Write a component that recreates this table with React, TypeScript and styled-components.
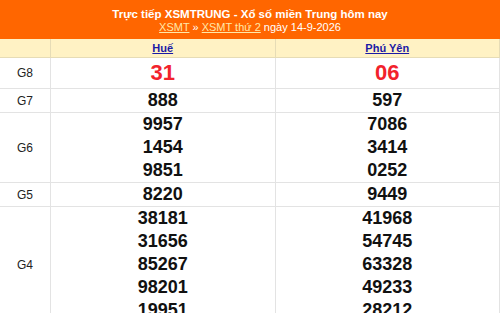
import React from 'react';
import styled, { createGlobalStyle } from 'styled-components';

type Prize = { label: string; values: string[][]; big?: boolean };

const provinces = ['Huế', 'Phú Yên'];

const prizes: Prize[] = [
  { label: 'G8', values: [['31'], ['06']], big: true },
  { label: 'G7', values: [['888'], ['597']] },
  { label: 'G6', values: [['9957', '1454', '9851'], ['7086', '3414', '0252']] },
  { label: 'G5', values: [['8220'], ['9449']] },
  {
    label: 'G4',
    values: [
      ['38181', '31656', '85267', '98201', '19951'],
      ['41968', '54745', '63328', '49233', '28212'],
    ],
  },
];

const GlobalStyle = createGlobalStyle`
  body {
    margin: 0;
    background: #ffffff;
    font-family: "Liberation Sans", Arial, sans-serif;
  }
`;

const Box = styled.div`
  width: 500px;
  overflow: hidden;
`;

const Title = styled.div`
  background-color: #ff6600;
  color: #ffffff;
  text-align: center;
  padding: 7px 0 4px;
  height: 28px;
`;

const TitleMain = styled.h2`
  margin: 0;
  font-size: 11.5px;
  font-weight: bold;
  line-height: 14px;
`;

const SubLine = styled.div`
  font-size: 11px;
  line-height: 13px;
`;

const CrumbLink = styled.a`
  color: #ffe8a8;
  text-decoration: underline;
`;

const Table = styled.table`
  width: 100%;
  border-collapse: collapse;
  table-layout: fixed;
`;

const HeadCell = styled.th`
  background-color: #fff2c4;
  border: 1px solid #e6dcb6;
  border-top: none;
  height: 18px;
  padding: 0;
  font-size: 11px;
  &:first-child {
    width: 50px;
    border-left: none;
  }
`;

const ProvinceLink = styled.a`
  color: #1a1aa6;
  font-weight: bold;
  text-decoration: underline;
`;

const LabelCell = styled.td`
  width: 50px;
  border: 1px solid #e3e3e3;
  border-left: none;
  text-align: center;
  font-size: 12px;
  color: #222222;
  padding: 0;
`;

const NumCell = styled.td`
  border: 1px solid #e3e3e3;
  text-align: center;
  padding: 0;
  vertical-align: middle;
`;

const Num = styled.div<{ $big?: boolean }>`
  font-weight: bold;
  font-size: ${(p) => (p.$big ? '22px' : '18px')};
  line-height: ${(p) => (p.$big ? '30px' : '23px')};
  color: ${(p) => (p.$big ? '#f2222c' : '#111111')};
`;

const App: React.FC = () => {
  return (
    <>
      <GlobalStyle />
      <Box>
        <Title>
          <TitleMain>Trực tiếp XSMTRUNG - Xổ số miền Trung hôm nay</TitleMain>
          <SubLine>
            <CrumbLink href="#">XSMT</CrumbLink> » <CrumbLink href="#">XSMT thứ 2</CrumbLink> ngày 14-9-2026
          </SubLine>
        </Title>
        <Table>
          <thead>
            <tr>
              <HeadCell />
              {provinces.map((p) => (
                <HeadCell key={p}>
                  <ProvinceLink href="#">{p}</ProvinceLink>
                </HeadCell>
              ))}
            </tr>
          </thead>
          <tbody>
            {prizes.map((prize) => (
              <tr key={prize.label}>
                <LabelCell>{prize.label}</LabelCell>
                {prize.values.map((col, i) => (
                  <NumCell key={i}>
                    {col.map((v) => (
                      <Num key={v} $big={prize.big}>
                        {v}
                      </Num>
                    ))}
                  </NumCell>
                ))}
              </tr>
            ))}
          </tbody>
        </Table>
      </Box>
    </>
  );
};

export default App;
